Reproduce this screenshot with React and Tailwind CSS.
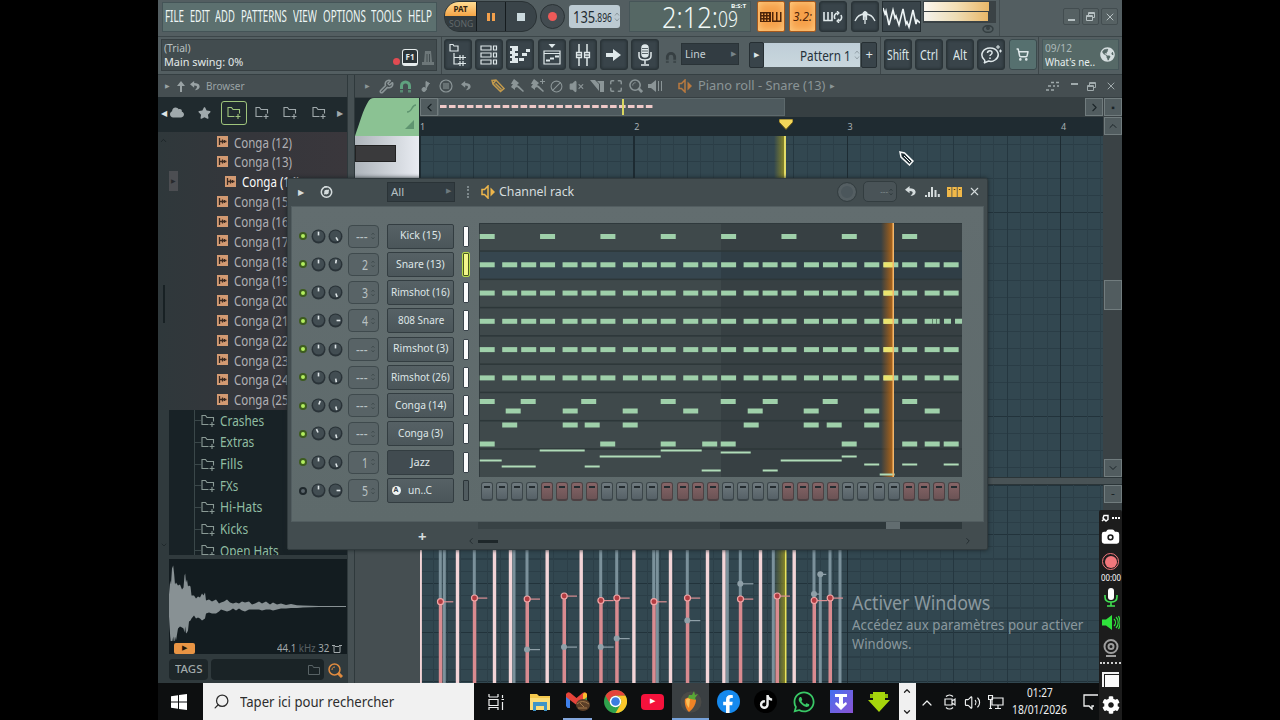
import { useLayoutEffect, useRef } from 'react';
import {
  Ban, Camera, ChevronDown, ChevronLeft, ChevronRight, ChevronUp, Maximize, Music2,
  Search, ShoppingCart, Volume2, VolumeX, Wrench, X,
} from 'lucide-react';
import { FaFacebookF, FaGlobeAmericas, FaTiktok, FaWhatsapp, FaCloud, FaStar, FaCog } from 'react-icons/fa';

// Squeezes a line of text into the width of its box (condensed UI lettering)
function Fit({ className = '', children }) {
  const box = useRef(null);
  const line = useRef(null);
  useLayoutEffect(() => {
    const k = box.current.clientWidth / line.current.offsetWidth;
    line.current.style.transform = `scaleX(${k})`;
  }, [children]);
  return (
    <span ref={box} className={`block shrink-0 whitespace-nowrap ${className}`}>
      <span ref={line} className="inline-block origin-left">{children}</span>
    </span>
  );
}

const MENU = [
  ['FILE', 'w-[19px]'], ['EDIT', 'w-[20px] ml-[6px]'], ['ADD', 'w-[20px] ml-[5px]'], ['PATTERNS', 'w-[46px] ml-[6px]'],
  ['VIEW', 'w-[24px] ml-[6px]'], ['OPTIONS', 'w-[43px] ml-[6px]'], ['TOOLS', 'w-[31px] ml-[5px]'], ['HELP', 'w-[24px] ml-[6px]'],
];

function DarkButton({ className = '', children }) {
  return (
    <div className={`flex h-[31px] w-[28px] shrink-0 items-center justify-center rounded-[3px] border border-[#2b3438] bg-[#39444a] text-[#dfe8ea] shadow-[inset_0_0_3px_#20292d] ${className}`}>
      {children}
    </div>
  );
}

function UndoArrow({ className }) {
  return (
    <svg viewBox="0 0 12 12" className={className} fill="currentColor">
      <path d="M5 0 0 4l5 4V5.500c3 0 4 1 3 3L6 11c4-.5 6-2.500 5.500-5C11 3.500 8.500 2.500 5 2.500z" />
    </svg>
  );
}

function Horseshoe({ className }) {
  return (
    <svg viewBox="0 0 13 13" className={className} fill="none" stroke="currentColor" strokeWidth="3">
      <path d="M2.500 9V6a4 4 0 0 1 8 0v3" /><path d="M2.500 10v2.500M10.500 10v2.500" opacity=".7" />
    </svg>
  );
}

function Transport() {
  return (
    <div className="ml-[7px] mt-px flex h-[31px] w-[93px] overflow-hidden rounded-[15px] border border-[#2a3235] bg-[#3a4449]">
      <div className="w-[31px] bg-[#333b3f]">
        <div className="flex h-[14px] items-center justify-center bg-gradient-to-b from-[#ffdc92] to-[#f5a545] text-[8px] font-bold text-[#31230f]">
          <Fit className="w-[14px]">PAT</Fit>
        </div>
        <div className="flex h-[16px] items-center justify-center text-[9px] text-[#62696b]">
          <Fit className="w-[24px]">SONG</Fit>
        </div>
      </div>
      <div className="flex w-[30px] items-center justify-center gap-[2px] border-x border-[#151b1e]">
        <i className="h-[8px] w-[3px] bg-[#f2a04c]" />
        <i className="h-[8px] w-[3px] bg-[#f2a04c]" />
      </div>
      <div className="flex flex-1 items-center justify-center pr-px"><i className="h-[8px] w-[8px] bg-[#cbd9de]" /></div>
    </div>
  );
}

function Spinner({ className = '' }) {
  return (
    <svg viewBox="0 0 6 12" className={`h-[12px] w-[6px] ${className}`} fill="none" stroke="currentColor">
      <path d="M1 4.500 3 2l2 2.500M1 7.500 3 10l2-2.500" />
    </svg>
  );
}

function WinButton({ kind }) {
  return (
    <div className="flex h-[17px] w-[17px] items-center justify-center rounded-[2px] border border-[#434d50] bg-[#566163] text-[#b6c0c2]">
      {kind === 'min' && <i className="mt-[6px] h-[2px] w-[7px] bg-current" />}
      {kind === 'max' && <RestoreIcon />}
      {kind === 'close' && <X className="h-[12px] w-[12px]" />}
    </div>
  );
}

function RestoreIcon() {
  return (
    <svg viewBox="0 0 9 9" className="h-[9px] w-[9px]" fill="none" stroke="currentColor">
      <path d="M.5 3.500h6v5h-6zM.5 4.500h6M2.500 3V.5h6v5H7M2.500 1.500h6" />
    </svg>
  );
}

function TopRow() {
  return (
    <div className="flex h-[37px] shrink-0 items-start border-b border-[#3c4649] bg-[#535e61] pl-[4px]">
      <div className="mt-[2px] flex h-[30px] w-[275px] items-center border border-[#445457] bg-[#5c706f] pb-[2px] pl-[2px] text-[16px] leading-none text-[#eef6f5]">
        {MENU.map(([t, w]) => <Fit key={t} className={w}>{t}</Fit>)}
      </div>
      <Transport />
      <div className="ml-[3px] mt-[4px] flex h-[25px] w-[25px] items-center justify-center rounded-full border border-[#2a3235] bg-[#434c51]">
        <i className="h-[9px] w-[9px] rounded-full bg-[#ee5a58]" />
      </div>
      <div className="ml-[4px] mt-[5px] flex h-[23px] w-[51px] items-center rounded-[3px] bg-[#bccad2] pl-[4px] text-[#1f2a30]">
        <Fit className="w-[22px] text-[17px] leading-[22px]">135</Fit>
        <Fit className="w-[17px] pt-[3px] text-[12px] leading-[18px]">.896</Fit>
        <Spinner className="ml-[2px] text-[#8c999f]" />
      </div>
      <div className="ml-[9px] mt-px flex h-[31px] w-[122px] items-start border border-[#465558] bg-[#556764] pl-[32px] font-light text-[#f0f8f6]">
        <Fit className="w-[56px] text-[30px] leading-[29px]">2:12:</Fit>
        <Fit className="w-[20px] pt-[2px] text-[21px] leading-[30px]">09</Fit>
        <Fit className="-ml-[7px] w-[15px] text-[6px] font-bold leading-[9px]">B:S:T</Fit>
      </div>
      <div className="ml-[6px] mt-px flex h-[31px] w-[28px] items-center justify-center rounded-[2px] border border-[#a6591c] bg-[#f6a04a] text-[#4e2409] shadow-[inset_0_0_8px_#ffd28a]">
        <svg viewBox="0 0 22 12" className="h-[12px] w-[22px]" fill="currentColor">
          <path d="M0 1h11v10H0zm1.500 1.500v1.500H3V2.500zm3 0v1.500H6V2.500zm3 0v1.500H9V2.500zm-6 3V7H3V5.500zm3 0V7H6V5.500zm3 0V7H9V5.500zm-6 3V10H3V8.500zm3 0V10H6V8.500zm3 0V10H9V8.500z" fillRule="evenodd" />
          <path d="M12 1h1.500v8.500H16V1h1.500v8.500H20V1h1.500v10H12z" />
        </svg>
      </div>
      <div className="ml-[4px] mt-px flex h-[31px] w-[27px] items-center justify-center rounded-[2px] border border-[#a6591c] bg-[#f6a04a] text-[13px] italic text-[#4e2409] shadow-[inset_0_0_8px_#ffd28a]">
        <Fit className="w-[19px]">3.2:</Fit>
      </div>
      <DarkButton className="ml-[3px] mt-px">
        <svg viewBox="0 0 20 12" className="h-[12px] w-[20px]" fill="none" stroke="currentColor" strokeWidth="1.600">
          <path d="M1 1v8.500h8V1M5 1v8" /><path d="M12 8c-1.500-3 0-6 3-6M18 4c1.500 3 0 6-3 6" /><path d="m14 0 2 2-2 2M16 8l-2 2 2 2" strokeWidth="1.200" />
        </svg>
      </DarkButton>
      <DarkButton className="ml-[4px] mt-px">
        <svg viewBox="0 0 22 14" className="h-[14px] w-[22px]" fill="none" stroke="currentColor" strokeWidth="1.300">
          <path d="M1 11c2-5 5-7 10-7s8 2 10 7" /><circle cx="11" cy="4" r="2" fill="currentColor" /><path d="M11 1v13M9.500 6v4M12.500 6v4" />
        </svg>
      </DarkButton>
      <div className="ml-[3px] mt-px h-[31px] w-[39px] border border-[#252e32] bg-[#39444a]">
        <svg viewBox="0 0 37 29" className="h-full w-full" fill="none" stroke="#eef5f6" strokeWidth="1.600">
          <path d="M0 6l2 6 1-3 3 14 4-15 2 8 1-2 3 9 4-16 3 15 1-2 2 5 4-17 3 14 1-4 3 3" />
        </svg>
      </div>
      <div className="ml-[2px] mt-px w-[73px]">
        <div className="flex h-[22px] flex-col gap-px bg-[#3a4245] p-px">
          <div className="h-[9px] w-[65px] bg-gradient-to-r from-[#fbf7ee] via-[#f3dfb4] to-[#e9b868]" />
          <div className="h-[9px] w-[64px] bg-gradient-to-r from-[#f4f3ec] via-[#eeddb5] to-[#e9b868]" />
        </div>
        <svg viewBox="0 0 12 8" className="ml-[59px] mt-[2px] h-[8px] w-[12px]" fill="none" stroke="#343e41" strokeWidth="1.500">
          <ellipse cx="6" cy="4" rx="5" ry="3.300" /><circle cx="6" cy="3" r="1.200" />
        </svg>
      </div>
      <div className="ml-[3px] h-[36px] w-px bg-[#434d50]" />
      <div className="ml-[63px] mt-[8px] flex gap-[2px]">
        <WinButton kind="min" /><WinButton kind="max" /><WinButton kind="close" />
      </div>
    </div>
  );
}

function ToolRow() {
  return (
    <div className="flex h-[38px] shrink-0 items-start border-b border-[#353f42] bg-[#535e61] pl-[3px] pt-[2px]">
      <div className="flex h-[32px] w-[276px] justify-between border border-[#363f42] bg-[#424c4f] pl-[2px] text-[11px] leading-[14px] text-[#e3eaea]">
        <div className="pt-px">
          <Fit className="w-[27px] text-[#b9c1c2]">(Trial)</Fit>
          <Fit className="w-[79px]">Main swing: 0%</Fit>
        </div>
        <div className="flex items-end pb-[4px] pr-[2px]">
          <i className="mb-px mr-[2px] h-[7px] w-[7px] rounded-full bg-[#e24b52]" />
          <div className="flex h-[17px] w-[16px] items-center justify-center rounded-[3px] border-[1.5px] border-b-[3px] border-[#e6eced] bg-[#2b3438] text-[8px] font-bold leading-none">F1</div>
          <svg viewBox="0 0 12 15" className="ml-[4px] h-[15px] w-[12px]" fill="#6d7779"><path d="M3 0h6l1 11h2v3H0v-3h2z" /><path d="M5 3v8M7.500 3v8" stroke="#424c4f" /></svg>
        </div>
      </div>
      <div className="ml-[4px] -mt-[2px] h-[37px] w-px bg-[#3d4649]" />
      <div className="ml-[2px] flex gap-[3.2px]">
        <DarkButton>
          <svg viewBox="0 0 20 24" className="h-[24px] w-[20px]" fill="none" stroke="currentColor" strokeWidth="1.200">
            <path d="M2 8V1.500h3l1 1.500h4v5zM6 10v11h5M6 14.500h5M12 12v5M12 18v5M15 12v5M15 18v5M10 14.500h8M10 20.500h8" />
          </svg>
        </DarkButton>
        <DarkButton>
          <svg viewBox="0 0 18 20" className="h-[20px] w-[18px]" fill="none" stroke="currentColor" strokeWidth="1.200">
            <path d="M1 1h10v4H1zM1 8h10v4H1zM1 15h10v4H1zM13.500 1h3v4h-3zM13.500 8h3v4h-3zM13.500 15h3v4h-3z" />
          </svg>
        </DarkButton>
        <DarkButton>
          <svg viewBox="0 0 20 17" className="h-[17px] w-[20px]" fill="currentColor">
            <path d="M0 0h8v5H5v2h3v3H5v2h3v5H0v-2h2v-3H0v-2h2V8H0V5h2V2H0zM9 12h5v3H9zM12 7h5v3h-5zM16 3h4v3h-4z" />
          </svg>
        </DarkButton>
        <DarkButton>
          <svg viewBox="0 0 18 21" className="h-[21px] w-[18px]" fill="none" stroke="currentColor" strokeWidth="1.200">
            <path d="M5.500 0h7L9 4z" fill="currentColor" stroke="none" /><path d="M1 7h16v13H1zM1 9.500h16" /><path d="M3 16.500h4M7 14.500h4M12 12.500h4" strokeWidth="2" />
          </svg>
        </DarkButton>
        <DarkButton>
          <svg viewBox="0 0 16 22" className="h-[22px] w-[16px]" fill="none" stroke="currentColor">
            <path d="M4 0v8M4 14v8M12 0v8M12 14v8" strokeWidth="2" opacity=".75" /><path d="M1.500 8.500h5v5h-5zM9.500 8.500h5v5h-5zM2 11h4M10 11h4" strokeWidth="1.300" />
          </svg>
        </DarkButton>
        <DarkButton>
          <svg viewBox="0 0 15 12" className="h-[12px] w-[15px]" fill="currentColor"><path d="M0 4h7V0l8 6-8 6V8H0z" /></svg>
        </DarkButton>
        <DarkButton>
          <svg viewBox="0 0 14 22" className="h-[22px] w-[14px]" fill="none" stroke="currentColor" strokeWidth="1.500">
            <rect x="4" y="1" width="6" height="12" rx="3" fill="currentColor" /><path d="M1 8v4c0 2 2 4 6 4s6-2 6-4V8M7 16v4M3 21h8" /><path d="M4 4.500h6M4 7h6M4 9.500h6" stroke="#39444a" strokeWidth=".8" />
          </svg>
        </DarkButton>
      </div>
      <Horseshoe className="ml-[6px] mt-[12px] h-[13px] w-[12px] text-[#363f42]" />
      <div className="ml-[4px] mt-[4px] flex h-[22px] w-[58px] items-center border border-[#2a3337] bg-[#323c42] pl-[3px] text-[11px] text-[#c5d0d4]">
        <Fit className="w-[21px]">Line</Fit>
        <span className="ml-auto mr-[2px] text-[7px] text-[#78848a]">▶</span>
      </div>
      <div className="ml-[10px] mt-[3px] flex h-[26px] w-[15px] items-center justify-center rounded-[2px] border border-[#262f33] bg-[#39444a] text-[7px] text-[#dde6e8]">▶</div>
      <div className="mt-[4px] flex h-[24px] w-[96px] items-center bg-gradient-to-b from-[#bfced8] to-[#c9d7dd] pl-[36px] text-[15px] text-[#25313a]">
        <Fit className="w-[51px]">Pattern 1</Fit>
        <Spinner className="ml-[3px] text-[#96a4ab]" />
      </div>
      <div className="ml-px mt-[3px] flex h-[26px] w-[16px] items-center justify-center rounded-[2px] border border-[#262f33] bg-[#39444a] text-[13px] text-[#dde6e8]">+</div>
      <div className="ml-[3px] -mt-[2px] h-[37px] w-px bg-[#3d4649]" />
      <div className="ml-[3px] flex gap-[3.100px] text-[15px]">
        <DarkButton><Fit className="w-[22px]">Shift</Fit></DarkButton>
        <DarkButton><Fit className="w-[18px]">Ctrl</Fit></DarkButton>
        <DarkButton><Fit className="w-[14px]">Alt</Fit></DarkButton>
        <DarkButton>
          <svg viewBox="0 0 22 20" className="h-[20px] w-[22px]" fill="none" stroke="currentColor" strokeWidth="1.500">
            <path d="M4 18c1-1 1-2 .5-3C-1 10 3 3 10 3c8 0 11 8 5 12-2 1.500-5 1.500-6.500 1L4 18z" /><path d="M7.500 8c0-3 5-3 4.500 0 0 1.500-2 1.500-2 3M10 12.500V14" /><path d="M18 0v4M16 2h4M20.500 4.500v3M19 6h3" strokeWidth="1" />
          </svg>
        </DarkButton>
        <div className="flex h-[31px] w-[28px] items-center justify-center rounded-[3px] border border-[#3b4a4d] bg-[#56706f] text-[#dfe8ea]"><ShoppingCart className="h-[13px] w-[13px]" strokeWidth={2.8} /></div>
      </div>
      <div className="ml-px -mt-[2px] h-[37px] w-px bg-[#3d4649]" />
      <div className="ml-[3px] flex h-[31px] w-[77px] items-center justify-between border border-[#46575a] bg-[#566967] pl-[2px] pr-[3px] text-[10.5px] leading-[14px] text-[#e8f0f0]">
        <div><Fit className="w-[27px] text-[#acb9b9]">09/12</Fit><Fit className="w-[50px]">What's ne..</Fit></div>
        <FaGlobeAmericas className="h-[15px] w-[15px] text-[#d5dedf]" />
      </div>
    </div>
  );
}

const CONGAS = Array.from({ length: 14 }, (_, i) => i + 12);
const FOLDERS = [
  ['Crashes', 'w-[44px]'], ['Extras', 'w-[34px]'], ['Fills', 'w-[23px]'], ['FXs', 'w-[18px]'],
  ['Hi-Hats', 'w-[42px]'], ['Kicks', 'w-[28px]'], ['Open Hats', 'w-[59px]'],
];

function FolderIcon({ className = '' }) {
  return (
    <svg viewBox="0 0 14 13" className={`h-[13px] w-[14px] shrink-0 ${className}`} fill="none" stroke="currentColor" strokeWidth="1.100">
      <path d="M7.500 10.500H1V1.500h3.500L6 3.500h6.500v4M11 8v5M8.500 10.500h5" />
    </svg>
  );
}

// [x, height above the axis, depth below it]
const WAVE = [
  [0, 12, 10], [1.2, 26, 30], [2, 22, 37], [3, 38, 37], [4.2, 41, 30], [5.2, 32, 38], [6, 22, 30], [7, 24, 34], [9, 21, 22], [11, 22, 20],
  [13, 17, 21], [14.5, 19, 22], [15.5, 31, 26], [16.2, 33, 20], [17, 24, 27], [18, 27, 26], [19, 20, 24], [20, 21, 15], [21.5, 20, 14],
  [22.5, 11, 12], [25, 11, 9], [27, 8, 12], [29, 10, 11], [31, 9, 12], [33, 13, 14], [34.500, 11, 13], [36, 14, 12], [37, 6, 7], [40, 7, 6],
  [43, 5, 7], [47, 7, 7], [50, 3, 5], [52, 4, 3], [55, 5, 4], [58, 7, 5], [61, 4, 4], [64, 3, 2], [67, 4, 4], [70, 3, 2], [73, 5, 4],
  [76, 4, 5], [80, 5, 3], [83, 2, 3], [86, 3, 3], [90, 5, 3], [93, 3, 4], [97, 5, 3], [101, 2, 3], [104, 4, 4], [108, 2, 3], [112, 3, 2],
  [117, 1.5, 2], [122, 2.5, 1.5], [128, 1.2, 1.5], [134, 1, 1], [150, 0.6, 0.6], [177, 0.5, 0.5],
];
const wavePoints = [
  ...WAVE.map(([x, up]) => `${x},${47.5 - up}`),
  ...[...WAVE].reverse().map(([x, , down]) => `${x},${47.5 + down}`),
].join(' ');

function Browser() {
  return (
    <aside className="flex w-[189px] shrink-0 flex-col bg-[#303a3d]">
      <div className="flex h-[22px] items-center bg-[#454e51] pl-[7px] text-[11px] text-[#9aa3a5]">
        <span className="text-[6px]">▶</span>
        <svg viewBox="0 0 8 11" className="ml-[7px] h-[11px] w-[8px]" fill="currentColor"><path d="M4 0l4 5H5v6H3V5H0z" /></svg>
        <UndoArrow className="ml-[5px] h-[10px] w-[10px]" />
        <Fit className="ml-[6px] w-[39px]">Browser</Fit>
      </div>
      <div className="flex h-[35px] items-center bg-[#202a2e] pb-[4px] pl-[3px] text-[#a0a9ac]">
        <span className="text-[8px] text-[#dfe5e6]">◀</span>
        <FaCloud className="ml-[3px] h-[13px] w-[14px]" />
        <FaStar className="ml-[14px] h-[12px] w-[13px]" />
        <div className="ml-[10px] flex h-[24px] w-[26px] shrink-0 items-center justify-center rounded-[3px] border border-[#9fc47c] text-[#9fc47c]"><FolderIcon /></div>
        <FolderIcon className="ml-[8px]" />
        <FolderIcon className="ml-[14px]" />
        <FolderIcon className="ml-[15px]" />
        <span className="ml-[11px] text-[8px]">▶</span>
      </div>
      <div className="flex h-[278px] bg-gradient-to-r from-[#2f383b] via-[#35363b] to-[#3a373c]">
        <div className="flex w-[11px] flex-col items-center">
          <ChevronUp className="mt-[4px] h-[9px] w-[9px] text-[#182124]" />
          <i className="mt-[140px] h-[38px] w-[2px] bg-[#182124]" />
        </div>
        <div className="w-[10px] pt-[39px]">
          <div className="flex h-[20px] w-[9px] items-center justify-center bg-[#4c4e52] text-[6px] text-[#272a2d]">▶</div>
        </div>
        <div className="pl-[38px]">
          {CONGAS.map((n) => (
            <div key={n} className={`flex h-[19.820px] items-center text-[14.5px] leading-none ${n === 14 ? 'pl-[8px] text-[#fafafa]' : 'text-[#b0b0b4]'}`}>
              <svg viewBox="0 0 11 11" className="h-[11px] w-[11px]"><path d="M0 0h11v11H0z" fill="#d39a72" /><path d="M2.500 2v7M2.500 5.500h7M5.500 3.500v4M7.500 4v3" stroke="#3b2b22" strokeWidth="1.300" /></svg>
              <Fit className="ml-[6px] w-[58px]">{`Conga (${n})`}</Fit>
            </div>
          ))}
        </div>
      </div>
      <div className="flex h-[145px] overflow-hidden">
        <div className="flex w-[11px] items-end justify-center pb-[6px]"><ChevronDown className="h-[8px] w-[8px] text-[#182124]" /></div>
        <div className="flex-1 bg-[#182226]">
          <div className="ml-[25px] border-l border-[#3a4749]">
            {FOLDERS.map(([t, w]) => (
              <div key={t} className="flex h-[21.650px] items-center text-[14px] leading-none text-[#90bda2]">
                <i className="h-px w-[6px] bg-[#3a4749]" />
                <FolderIcon className="text-[#8a9a95]" />
                <Fit className={`ml-[5px] ${w}`}>{t}</Fit>
              </div>
            ))}
          </div>
        </div>
      </div>
      <div className="ml-[11px] mt-[4px] h-[95px] bg-[#131c20]">
        <svg viewBox="0 0 178 95" className="h-[82px] w-[178px]" preserveAspectRatio="xMidYMin slice"><polygon points={wavePoints} fill="#889194" /></svg>
        <div className="mt-px flex h-[12px] items-center pl-[5px] pr-[5px] text-[11px] text-[#a2a9ab]">
          <div className="flex h-[11px] w-[21px] items-center justify-center rounded-[2px] bg-[#e89444] text-[7px] text-[#201408]">▶</div>
          <Fit className="ml-auto w-[52px]">44.1 <span className="text-[#596164]">kHz</span> 32</Fit>
          <svg viewBox="0 0 10 9" className="ml-[3px] h-[9px] w-[10px]" fill="none" stroke="currentColor"><path d="M2 2v6.500h6V2M0 1.500h3M7 1.500h3M3 2.500h4" /></svg>
        </div>
      </div>
      <div className="ml-[11px] mt-[5px] flex items-center gap-[3px]">
        <div className="flex h-[21px] w-[39px] items-center justify-center rounded-[4px] bg-[#1d2629] text-[11px] font-medium text-[#a0a9aa]"><Fit className="w-[27px]">TAGS</Fit></div>
        <div className="flex h-[21px] w-[113px] items-center justify-end rounded-[4px] bg-[#1a2326] pr-[4px] text-[#586265]">
          <svg viewBox="0 0 12 10" className="h-[10px] w-[12px]" fill="none" stroke="currentColor"><path d="M.5 9.500v-9h4l1 2h6v7z" /></svg>
        </div>
        <svg viewBox="0 0 15 15" className="ml-px mt-px h-[15px] w-[15px]" fill="none" stroke="#df8a3f"><circle cx="6.500" cy="6.500" r="5.500" strokeWidth="1.500" /><path d="M4 7c0-2 1-3 3-3" /><path d="M10 10l4 4" strokeWidth="3" /></svg>
      </div>
    </aside>
  );
}

function ScrollKey({ className = '', children }) {
  return (
    <div className={`flex h-[18px] w-[18px] shrink-0 items-center justify-center border border-[#717c7e] bg-[#515c5f] text-[#1b2428] ${className}`}>{children}</div>
  );
}

const DASHES = Array.from({ length: 24 }, (_, i) => 1 + i * 8.95);

function PianoHeader() {
  return (
    <div className="flex h-[23px] items-center border-b border-[#363f42] bg-[#454e51] pl-[10px] text-[#8b9597]">
      <span className="w-[12px] text-[6px]">▶</span>
      <Wrench className="ml-[2px] h-[15px] w-[15px]" strokeWidth={2.5} />
      <Horseshoe className="ml-[5px] h-[13px] w-[13px] text-[#5fa27f]" />
      <Music2 className="ml-[8px] h-[13px] w-[12px] fill-current" />
      <svg viewBox="0 0 14 14" className="ml-[7px] h-[14px] w-[14px]" fill="none" stroke="currentColor" strokeWidth="1.200"><circle cx="7" cy="7" r="6" /><path d="M4 5h6M4 7h6M4 9h6" /></svg>
      <UndoArrow className="ml-[8px] h-[10px] w-[10px]" />
      <svg viewBox="0 0 14 14" className="ml-[20px] h-[14px] w-[14px]" fill="none" stroke="#c39a4c" strokeWidth="1.500"><path d="M1 1.500 5 1l8 8.500-3.500 3L2 5zM2 5l3-4M4.500 4.500l6 6" /></svg>
      <svg viewBox="0 0 15 14" className="ml-[5px] h-[14px] w-[15px]" fill="currentColor"><path d="M4 0l5 4-2 2 2 1 5 5-1 1-6-5-2 1 0 2-4-3 2-3H1l1-2z" /></svg>
      <svg viewBox="0 0 16 14" className="ml-[5px] h-[14px] w-[16px]" fill="currentColor"><path d="M4 0l5 4-2 2 2 1 5 5-1 1-6-5-2 1 0 2-4-3 2-3H1l1-2zM12 0h1v2h2v1h-2v2h-1V3h-2V2h2z" /></svg>
      <Ban className="ml-[4px] h-[13px] w-[13px] rotate-90" />
      <VolumeX className="ml-[6px] h-[15px] w-[15px] fill-current" />
      <svg viewBox="0 0 14 13" className="ml-[6px] h-[13px] w-[14px]" fill="currentColor"><path d="M0 0h5l4 4v7zM7 1h7v11h-4V4z" /></svg>
      <Maximize className="ml-[5px] h-[14px] w-[14px]" strokeWidth={2.5} />
      <svg viewBox="0 0 15 15" className="ml-[6px] h-[14px] w-[14px]" fill="none" stroke="currentColor"><circle cx="6.500" cy="6.500" r="5.500" strokeWidth="1.700" /><path d="M4 7c0-2 1-3 3-3" /><path d="M10 10l4 4" strokeWidth="3" /></svg>
      <svg viewBox="0 0 14 12" className="ml-[5px] h-[12px] w-[14px]" fill="currentColor"><path d="M0 4h3l5-4v12L3 8H0zM10 1h1v10h-1zM13 1h1v10h-1z" /></svg>
      <SpeakerPlay className="ml-[16px] text-[#b9793f]" />
      <Fit className="ml-[6px] w-[127px] text-[12.5px]">Piano roll - Snare (13)</Fit>
      <span className="ml-[5px] text-[6px]">▶</span>
      <div className="ml-auto mr-[5px] flex items-center gap-[9px] text-[#a0aaac]">
        <svg viewBox="0 0 16 10" className="h-[10px] w-[16px]" fill="none" stroke="currentColor" strokeWidth="1.500"><path d="M0 9h3M5 9h3M2 5h3M7 5h2M5 1.500h3M10 1.500h3M11 5h2" /></svg>
        <i className="mb-[5px] h-[2px] w-[7px] bg-current" />
        <RestoreIcon />
        <X className="h-[12px] w-[12px]" />
      </div>
    </div>
  );
}

function SpeakerPlay({ className = '' }) {
  return (
    <svg viewBox="0 0 14 14" className={`h-[14px] w-[14px] shrink-0 ${className}`} fill="none" stroke="currentColor" strokeWidth="1.500">
      <path d="M7 1v12L3.500 9.500H1v-5h2.500z" /><path d="M9.500 2.500 14 7l-4.500 4.500z" fill="currentColor" stroke="none" />
    </svg>
  );
}

// Velocity lanes: [x, y, stem above the handle], measured from the left edge of the grid
const PINK = [0, 36.3, 73.3, 89.3, 126, 160, 212.7, 249.3, 286.3, 302.7, 339.3, 373];
const GREY = [23.3, 93, 236.3, 306.3, 352.3, 419];
const RED = [
  [19.3, 51.7, true], [53.3, 48, true], [106, 49, true], [143, 46, false], [179.7, 50.5, true], [195.7, 48, true],
  [232.7, 51.7, true], [266.3, 48, true], [319.3, 49, true], [356, 46, false], [393, 50.5, true], [409, 48, true],
];
const GHOST = [[106, 99.5], [143, 97], [179.7, 97], [195.7, 88.5], [266.3, 70.5], [319.3, 33.7], [393, 44], [399.3, 24.3]];

function VelocityLane() {
  return (
    <svg viewBox="0 0 683 133" className="block h-[133px] w-[683px]">
      <defs>
        <linearGradient id="velHead"><stop offset="0" stopColor="#77772a" stopOpacity="0" /><stop offset="1" stopColor="#8d8b24" /></linearGradient>
      </defs>
      <rect x="354" y="0" width="12" height="133" fill="url(#velHead)" />
      {GREY.map((x) => <rect key={x} x={x - 0.5} width="3" height="133" fill="#7b919b" />)}
      <rect x="398.800" y="24" width="3" height="109" fill="#7b919b" />
      {RED.map(([x, y, top]) => (
        <g key={x}>
          {top && <rect x={x - 0.5} width="3" height={y} fill="#7b919b" />}
          <rect x={x - 0.5} y={y} width="3.500" height="133" fill="#d98b90" />
        </g>
      ))}
      {GHOST.map(([x, y]) => (
        <g key={`${x}-${y}`} fill="#8fa0a8"><rect x={x} y={y - 0.5} width={x > 390 ? 7 : 14} height="1.200" /><circle cx={x + 1} cy={y} r="3" /></g>
      ))}
      {PINK.map((x) => <rect key={x} x={x - 0.5} width={x ? 3.4 : 2.4} height="133" fill="#f3d5d8" />)}
      <rect x="365" width="1.500" height="133" fill="#e8e25c" />
      {RED.map(([x, y]) => (
        <g key={x}>
          <rect x={x} y={y - 0.5} width="14" height="1.200" fill="#dc8f93" />
          <circle cx={x + 1.2} cy={y} r="3" fill="#b23c42" stroke="#f0a5a6" strokeWidth="1.200" />
        </g>
      ))}
    </svg>
  );
}

function PianoRoll() {
  return (
    <section className="flex w-[767px] flex-col bg-[#454e51]">
      <PianoHeader />
      <div className="flex h-[379px]">
        <div className="w-[65px] bg-[#202a2e]">
          <svg viewBox="0 0 64 38" className="block h-[38px] w-[64px]">
            <path d="M0 38C5 24 8 12 13 4q2-4 6-4h45v38z" fill="#8bc293" />
            <path d="M52 14c6 0 4-7 9-7" stroke="#5f9470" fill="none" strokeWidth="1.500" /><path d="M50 31l9-9v9z" fill="#5f9470" />
          </svg>
          <div className="h-[341px] w-[64px] bg-gradient-to-r from-[#aeb5bb] to-[#e9ecf2] pt-[9px]"><div className="h-[17px] w-[41px] border border-[#222] bg-[#3a3a3c]" /></div>
        </div>
        <div className="w-[683px]">
          <div className="flex h-[19px] bg-[#363f42]">
            <ScrollKey className="border-[#3a4447] text-[#161f22]"><ChevronLeft className="h-[13px] w-[13px]" /></ScrollKey>
            <div className="h-[18px] w-[347px] border border-[#5d696c] bg-[#4e5a5e]">
              <svg viewBox="0 0 345 16" className="block h-[16px] w-[345px]">
                {DASHES.map((x) => <rect key={x} x={x} y="6" width="6.600" height="3" fill="#efc9c8" />)}
                <rect x="183" width="2" height="16" fill="#d9d660" />
              </svg>
            </div>
            <ScrollKey className="ml-auto"><ChevronRight className="h-[13px] w-[13px]" /></ScrollKey>
          </div>
          <div className="relative flex h-[19px] overflow-hidden bg-[#1f2b31] text-[9px] leading-[20px] text-[#a7b0b4]">
            {[1, 2, 3, 4].map((n) => <div key={n} className="w-[213.300px] shrink-0 pl-[1px] first:pl-0">{n}</div>)}
            <svg viewBox="0 0 14 11" className="absolute left-[359px] top-[2px] h-[11px] w-[14px]"><path d="M0 0h14v3L7 10.500 0 3z" fill="#f3d65a" stroke="#6e5d18" /></svg>
          </div>
          <div className="h-[341px] bg-[#324750] bg-[repeating-linear-gradient(90deg,#1d2b32_0_1.500px,transparent_1.500px_213.330px),repeating-linear-gradient(90deg,#253740_0_1px,transparent_1px_53.330px),repeating-linear-gradient(90deg,#2c3f48_0_1px,transparent_1px_13.333px),repeating-linear-gradient(180deg,transparent_0_76px,#22333b_76px_77px,transparent_77px_204px),repeating-linear-gradient(180deg,transparent_0_8px,#2a3d46_8px_9px,transparent_9px_17px)]">
            <div className="ml-[354px] h-full w-[12px] border-r-2 border-[#e3dc67] bg-gradient-to-r from-transparent to-[#85842a]" />
          </div>
        </div>
        <div className="flex w-[19px] flex-col bg-[#3a4245] pl-px">
          <ScrollKey className="text-[10px] leading-none">▪</ScrollKey>
          <ScrollKey className="mt-px"><ChevronUp className="h-[12px] w-[12px]" /></ScrollKey>
          <div className="mt-[145px] h-[30px] w-[18px] border border-[#717c7e] bg-[#515c5f]" />
          <ScrollKey className="mt-auto"><ChevronDown className="h-[12px] w-[12px]" /></ScrollKey>
        </div>
      </div>
      <div className="h-[8px] border-y border-[#2b3538] bg-[#495356]" />
      <div className="flex h-[198px]">
        <div className="w-[65px] bg-[#454e51]" />
        <div className="flex w-[683px] flex-col justify-end bg-[#324750] bg-[repeating-linear-gradient(90deg,#1d2b32_0_1.500px,transparent_1.500px_213.330px),repeating-linear-gradient(90deg,#253740_0_1px,transparent_1px_53.330px),repeating-linear-gradient(90deg,#2c3f48_0_1px,transparent_1px_13.333px),repeating-linear-gradient(180deg,#22333b_0_1px,transparent_1px_49px),repeating-linear-gradient(180deg,#2b3e47_0_1px,transparent_1px_12.250px)]">
          <VelocityLane />
        </div>
        <div className="w-[19px] bg-[#3a4245] pl-px"><ScrollKey className="text-[12px]">-</ScrollKey></div>
      </div>
    </section>
  );
}

const CHANNELS = [
  { n: '---', name: 'Kick (15)', w: 'w-[41px]', a: 0, b: 150 },
  { n: '2', name: 'Snare (13)', w: 'w-[49px]', a: 0, b: 10, picked: true },
  { n: '3', name: 'Rimshot (16)', w: 'w-[59px]', a: 0, b: 160 },
  { n: '4', name: '808 Snare', w: 'w-[46px]', a: 0, b: 90 },
  { n: '---', name: 'Rimshot (3)', w: 'w-[55px]', a: 0, b: 0 },
  { n: '---', name: 'Rimshot (26)', w: 'w-[59px]', a: 0, b: 170 },
  { n: '---', name: 'Conga (14)', w: 'w-[51px]', a: 20, b: 165 },
  { n: '---', name: 'Conga (3)', w: 'w-[45px]', a: -25, b: 165 },
  { n: '1', name: 'Jazz', w: 'w-[20px]', a: 0, b: 160, dark: true },
  { n: '5', name: 'un..C', w: 'w-[24px]', a: 0, b: 90, off: true },
];

function Knob({ angle }) {
  return (
    <svg viewBox="0 0 14 14" className="block h-[15px] w-[15px] shrink-0">
      <circle cx="7" cy="7" r="6.500" fill="#2a3338" /><circle cx="7" cy="6.500" r="5.200" fill="#424d52" />
      <path d="M7 6V2.500" stroke="#dfe6e8" strokeWidth="1.500" transform={`rotate(${angle} 7 7)`} />
    </svg>
  );
}

function ChannelStrip({ c }) {
  return (
    <div className="flex h-[28.280px] items-center">
      <i className={`h-[8px] w-[8px] rounded-full border-2 ${c.off ? 'border-[#20292d] bg-[#59646a]' : 'border-[#3d5c1f] bg-[#b2ee5e]'}`} />
      <span className="ml-[4px]"><Knob angle={c.a} /></span>
      <span className="ml-[2px]"><Knob angle={c.b} /></span>
      <div className="ml-[5px] flex h-[23px] w-[31px] items-center justify-end rounded-[4px] border border-[#3f4a4d] bg-[#586366] pr-[2px] text-[14px] text-[#b8c1c3]">
        {c.n === '---' ? <Fit className="w-[12px]">---</Fit> : <Fit className="w-[6px]">{c.n}</Fit>}
        <Spinner className="ml-[2px] scale-75 text-[#3d484b]" />
      </div>
      <div className={`ml-[8px] flex h-[25px] w-[67px] items-center justify-center rounded-[2px] border border-[#333d41] pb-px text-[11px] text-[#dfe6e7] ${c.dark ? 'bg-[#414b50]' : 'bg-gradient-to-b from-[#566165] to-[#4b565a]'}`}>
        {c.off && <span className="mr-[7px] flex h-[9px] w-[9px] items-center justify-center rounded-full bg-[#eef3f3] text-[7px] font-bold text-[#39444a]">A</span>}
        <Fit className={`${c.w} ${c.off ? 'mr-[18px]' : ''}`}>{c.name}</Fit>
      </div>
      <div className={`ml-[9px] w-[6px] rounded-[1px] border ${c.picked ? 'h-[23px] border-[#4a5a1c] bg-[#f3f58c] outline outline-[#b9dc4c]' : c.off ? 'h-[21px] border-[#2c3539] bg-[#515c60]' : 'h-[21px] border-[#39434a] bg-[#fbfbfc]'}`} />
    </div>
  );
}

const HATS = Array.from({ length: 24 }, (_, i) => Math.floor(i / 3) * 60.35 + [0, 22.5, 41.5][i % 3]);
const KICKS = Array.from({ length: 8 }, (_, i) => i * 60.35);
const CONGA14 = [[0, 41, 101.5, 181, 241, 283, 343, 422.5], [26, 83, 143, 203.5, 268, 324, 384.5, 445]];
const CONGA3 = [[22.5, 83, 105, 143, 264, 324, 347, 384.5], [0, 120.5, 181, 222.5, 241, 362, 422.5, 445, 464]];
const JAZZ = [
  [0, 22, 238], [22, 34, 244], [60, 45, 228], [105, 15, 244], [120, 61, 234], [181, 41, 228], [222, 19, 248], [241, 30, 230],
  [283, 15, 248], [301, 61, 238], [362, 15, 234], [384.5, 15, 242], [400, 15, 252], [422.5, 15, 242], [464, 15, 242],
];

function PatternView() {
  const note = (x, y) => <rect key={`${x}-${y}`} x={x + 0.7} y={y} width="15" height="5" fill="#9fd0aa" />;
  return (
    <svg viewBox="0 0 484 254" className="block h-[254px] w-[484px]">
      <defs>
        <linearGradient id="rackHead"><stop offset="0" stopColor="#b5630f" stopOpacity="0" /><stop offset="1" stopColor="#bb6914" /></linearGradient>
      </defs>
      <rect width="483" height="254" fill="#3f494b" />
      <rect y="28" width="483" height="28" fill="#36464f" />
      <rect x="242" width="241" height="254" fill="#20282b" opacity=".25" />
      {[1, 2, 3, 4, 5, 6, 7, 8].map((i) => <rect key={i} y={i * 28.28 - 1} width="483" height="1.500" fill="#2d3739" />)}
      <path d="M.5 254V.5H483" fill="none" stroke="#2f393c" />
      <rect x="402" width="13" height="254" fill="url(#rackHead)" />
      {KICKS.map((x) => note(x, 11))}
      {[1, 2, 4, 5].map((r) => HATS.map((x) => note(x, 11 + r * 28.28)))}
      {HATS.slice(0, 23).map((x) => note(x, 95.8))}
      <path d="M465 95.800h7v5h-7zM476 95.800h7v5h-7z" fill="#9fd0aa" />
      <path d="M453.500 96v5M457.500 96v5" stroke="#5d8068" />
      {[1, 2, 3, 4, 5].map((r) => <rect key={r} x="404.500" y={11 + r * 28.28} width="10" height="5" fill="#ece46e" />)}
      {CONGA14[0].map((x) => note(x, 176))}
      {CONGA14[1].map((x) => note(x, 185.5))}
      {CONGA3[0].map((x) => note(x, 199.5))}
      {CONGA3[1].map((x) => note(x, 218.5))}
      {JAZZ.map(([x, w, y]) => <rect key={x} x={x + 0.7} y={y - 1.5} width={w} height="2" fill="#b0dcb8" />)}
      <rect x="413.500" width="1.500" height="254" fill="#f3b66a" />
    </svg>
  );
}

function ChannelRack() {
  return (
    <div className="absolute left-[129px] top-[178px] flex h-[372px] w-[701px] flex-col rounded-[2px] border border-[#313b3e] bg-[#424c4f] shadow-[0_0_4px_#1b2427]">
      <div className="flex h-[27px] shrink-0 items-center pb-[2px] pl-[10px] text-[#d5dcdd]">
        <span className="w-[8px] text-[8px]">▶</span>
        <svg viewBox="0 0 12 12" className="ml-[14px] h-[13px] w-[13px]" fill="none" stroke="currentColor" strokeWidth="1.400"><circle cx="6" cy="6.500" r="4.800" /><path d="M4 1.700h2.500M8 4.500l-4 4" /><circle cx="6" cy="6.500" r="1.500" fill="currentColor" /></svg>
        <div className="ml-[54px] flex h-[20px] w-[68px] items-center border border-[#2a3337] bg-[#333d42] pl-[3px] text-[11.5px] text-[#b6c0c3]">
          <Fit className="w-[13px]">All</Fit>
          <span className="ml-auto mr-[3px] text-[7px] text-[#6d797e]">▶</span>
        </div>
        <div className="ml-[12px] h-[12px] border-l-2 border-dotted border-[#7d888b]" />
        <SpeakerPlay className="ml-[12px] text-[#eeb64b]" />
        <Fit className="ml-[4px] w-[75px] pt-px text-[12.5px]">Channel rack</Fit>
        <div className="ml-auto mr-[6px] flex items-center">
          <div className="h-[18px] w-[18px] rounded-full border-[3px] border-[#545e62] bg-[#4b565b] outline outline-[#343e41]" />
          <div className="ml-[7px] flex h-[21px] w-[34px] items-center justify-end rounded-[5px] border border-[#333d40] bg-[#495357] pr-[2px] text-[8px] text-[#7d888b]">---<Spinner className="scale-75 text-[#2e383b]" /></div>
          <UndoArrow className="ml-[8px] h-[11px] w-[11px]" />
          <svg viewBox="0 0 15 10" className="ml-[9px] h-[10px] w-[15px]" fill="currentColor"><path d="M0 8h2v2H0zM3 5h2v5H3zM6 0h2v10H6zM9.500 3h2v7h-2zM12.800 7h2v3h-2z" /></svg>
          <svg viewBox="0 0 15 10" className="ml-[7px] h-[10px] w-[15px]"><path d="M0 0h4.500v10H0zM5.300 0h4.500v10H5.300zM10.600 0H15v10h-4.400z" fill="#f0b849" /><path d="M1.500 2.500h1.500M6.800 2.500h1.500M12 2.500h1.500" stroke="#5f4516" /></svg>
          <X className="ml-[6px] h-[13px] w-[13px]" />
        </div>
      </div>
      <div className="mx-[3px] flex h-[316px] shrink-0 border border-[#525d60] bg-gradient-to-b from-[#626d6f] to-[#5e6a6b] pl-[7px] pt-[16px]">
        <div className="-mt-px w-[180px] shrink-0">{CHANNELS.map((c) => <ChannelStrip key={c.name} c={c} />)}</div>
        <div className="w-[484px]">
          <PatternView />
          <div className="flex pl-[1.500px] pt-[5px]">
            {Array.from({ length: 32 }, (_, i) => (
              <div key={i} className="w-[15.080px]">
                <div className={`h-[19px] w-[12px] rounded-[3px] border border-b-2 pt-[3px] ${i % 8 > 3 ? 'border-[#4d4143] bg-gradient-to-b from-[#876567] to-[#6b5355]' : 'border-[#3c464a] bg-gradient-to-b from-[#6f7a7f] to-[#566167]'}`}>
                  <div className="mx-auto h-[2px] w-[6px] bg-[#242c30]" />
                </div>
              </div>
            ))}
          </div>
        </div>
      </div>
      <div className="flex h-[26px]">
        <div className="w-[190px] pl-[130px] pt-[4px] text-[15px] font-bold leading-[20px] text-[#d5dcdd]">+</div>
        <div className="w-[484px]">
          <div className="flex h-[7px] bg-gradient-to-r from-[#384245] from-50% to-[#2e383b] to-50%"><div className="ml-[408px] w-[14px] bg-[#626d70]" /></div>
          <div className="flex h-[17px] items-end text-[#1e272a]">
            <ChevronLeft className="-ml-[12px] h-[10px] w-[10px]" />
            <i className="mb-[3px] ml-[2px] h-[3px] w-[20px] bg-current" />
            <ChevronRight className="-mr-[11px] ml-auto h-[10px] w-[10px]" />
          </div>
        </div>
      </div>
    </div>
  );
}

function Chrome() {
  return (
    <svg viewBox="0 0 24 24" className="h-[23px] w-[23px]">
      <circle cx="12" cy="12" r="12" fill="#2fa24c" />
      <path d="M1.600 6A12 12 0 0 1 22.400 6H12a6 6 0 0 0-5.200 9z" fill="#e5443a" />
      <path d="M22.400 6A12 12 0 0 1 12 24l5.200-9A6 6 0 0 0 12 6z" fill="#fbc629" />
      <circle cx="12" cy="12" r="6" fill="#fff" /><circle cx="12" cy="12" r="4.500" fill="#3b7de0" />
    </svg>
  );
}

function Gmail() {
  return (
    <svg viewBox="0 0 24 20" className="h-[20px] w-[24px]">
      <path d="M0 2h4v14H1.500L0 14z" fill="#3f80ea" /><path d="M17 2h4v10h-4z" fill="#34a853" />
      <path d="M0 2q2-3 4.500-1l6 5 6-5Q19-1 21 2v3l-10.500 8L0 5z" fill="#e5443a" /><path d="M17 2q2-3 4 0v3l-4 3z" fill="#f7be2d" />
      <ellipse cx="17" cy="13" rx="7" ry="6" fill="#5b3f28" /><path d="M11 12q5-5 12 0M12 16h9M14 11l4 4" stroke="#a67a4c" fill="none" />
    </svg>
  );
}

function Taskbar() {
  const cell = 'relative flex h-[37px] w-[37.700px] items-center justify-center';
  return (
    <footer className="flex h-[37px] shrink-0 bg-[#0d0f10] text-[#eef0f0]">
      <div className="flex w-[45px] items-center justify-center pr-[3px]">
        <svg viewBox="0 0 16 16" className="h-[16px] w-[16px]" fill="#fff"><path d="M0 2.200 7 1.200v6.300H0zM8 1l8-1v7.500H8zM0 8.500h7v6.300L0 13.800zM8 8.500h8V16l-8-1z" /></svg>
      </div>
      <div className="flex w-[271px] items-center bg-[#f1f1f1] pl-[10px] text-[#2d2d2d]">
        <Search className="h-[17px] w-[17px] -scale-x-100" strokeWidth={1.8} />
        <Fit className="ml-[10px] w-[154px] text-[15px]">Taper ici pour rechercher</Fit>
      </div>
      <div className="flex w-[47px] items-center justify-center pr-[3px]">
        <svg viewBox="0 0 16 16" className="h-[16px] w-[16px]" fill="none" stroke="currentColor" strokeWidth="1.200"><path d="M1 0v3M10 0v3M1 3h9M1 5.500h9v6H1zM1 16v-2.500h9V16M14.500 1v3M14.500 8v8M13.500 5.500h2.500" /></svg>
      </div>
      <div className={cell}>
        <svg viewBox="0 0 20 18" className="h-[18px] w-[20px]"><path d="M0 1h7l2 2h11v14H0z" fill="#f5c84c" /><path d="M0 5h20v12H0z" fill="#fadc78" /><path d="M3 18V9h14v9h-3v-5H6v5z" fill="#3d94c7" /></svg>
      </div>
      <div className={cell}><Gmail /><i className="absolute bottom-0 h-[2px] w-[29px] bg-[#83a6dc]" /></div>
      <div className={cell}><Chrome /></div>
      <div className={cell}>
        <div className="flex h-[16px] w-[23px] items-center justify-center rounded-[4px] bg-[#f5123c] text-[7px] text-white">▶</div>
      </div>
      <div className={`${cell} bg-[#3a3f42]`}>
        <svg viewBox="0 0 22 22" className="h-[22px] w-[22px]"><circle cx="11" cy="11" r="10.500" fill="#4a4a47" /><path d="M5 8c4-3 9-2 11 1 0 4-3 9-7 12-3-2-5-9-4-13z" fill="#f08325" /><path d="M6 9c1-2 3-2 4-1l-1 9c-2-2-3-5-3-8z" fill="#fbbf57" /><path d="M8 7l1-3 3 0 2-4 1 4 3-1-3 4 1 2-5-1z" fill="#58a636" /></svg>
        <i className="absolute bottom-0 h-[2px] w-full bg-[#76a2da]" />
      </div>
      <div className={cell}><div className="flex h-[23px] w-[23px] items-end justify-center rounded-full bg-[#1589ee]"><FaFacebookF className="h-[18px] w-[16px] text-white" /></div></div>
      <div className={cell}><div className="flex h-[23px] w-[23px] items-center justify-center rounded-full bg-black"><FaTiktok className="h-[14px] w-[14px]" /></div></div>
      <div className={cell}><FaWhatsapp className="h-[24px] w-[24px] text-[#39c866]" /></div>
      <div className={cell}>
        <div className="flex h-[23px] w-[23px] items-center justify-center bg-gradient-to-br from-[#3c6ff0] to-[#8752d4]">
          <svg viewBox="0 0 14 16" className="h-[16px] w-[14px]" fill="#fff"><path d="M1 0h12v3H9v7l3-2 1 2-6 6-6-6 1-2 3 2V3H1z" /></svg>
        </div>
      </div>
      <div className={cell}>
        <svg viewBox="0 0 22 22" className="h-[22px] w-[22px]"><path d="M5 1h12v8h5L11 21 0 9h5z" fill="#a6d60c" /><path d="M2 3h3v4H2zM17 3h3v4h-3z" fill="#8dbb0a" /></svg>
      </div>
      <div className="ml-px flex w-[17px] flex-col items-center justify-between bg-[#f0f0f0] py-[3px] text-[#222]"><ChevronUp className="h-[10px] w-[10px]" strokeWidth={3} /><ChevronDown className="h-[10px] w-[10px]" strokeWidth={3} /></div>
      <ChevronUp className="ml-[3px] mt-[12px] h-[16px] w-[16px]" strokeWidth={1.8} />
      <svg viewBox="0 0 14 16" className="ml-[8px] mt-[11px] h-[16px] w-[14px]" fill="none" stroke="currentColor" strokeWidth="1.200"><path d="M2 5h7v6H2zM9 7l3-2v6l-3-2M3 2.500C5 .5 8 .5 10 2.500M3 13.500c2 2 5 2 7 0" /></svg>
      <Volume2 className="ml-[7px] mt-[11px] h-[17px] w-[17px]" strokeWidth={1.6} />
      <svg viewBox="0 0 16 14" className="ml-[7px] mt-[12px] h-[14px] w-[16px]" fill="none" stroke="currentColor" strokeWidth="1.200"><path d="M4 3h11v7H4zM7 13.500h6M10 10v3M.5.5h4v4h-4zM2.500 5v8M1 13.500h3" /></svg>
      <div className="ml-[8px] flex w-[56px] flex-col items-center pt-[1px] text-[12px] leading-[17px]"><Fit className="w-[26px]">01:27</Fit><Fit className="w-[55px]">18/01/2026</Fit></div>
      <svg viewBox="0 0 16 16" className="ml-[15px] mt-[11px] h-[16px] w-[16px]" fill="none" stroke="currentColor" strokeWidth="1.300"><path d="M15 1H1v11h5l3 3v-3h2" /></svg>
    </footer>
  );
}

function RecorderBar() {
  return (
    <div className="absolute bottom-0 left-[941px] flex h-[210px] w-[23px] flex-col items-center rounded-t-[2px] bg-[#1c1c1c] text-white">
      <div className="mt-[4px] flex h-[8px] items-center gap-[3px]">
        <svg viewBox="0 0 8 8" className="h-[8px] w-[8px]" fill="none" stroke="currentColor" strokeWidth="1.400"><path d="M1 7l2-2M3 1.500h4v4l-2 1.500-3-3z" /></svg>
        <span className="flex gap-px"><i className="h-[2px] w-[2px] bg-white" /><i className="h-[2px] w-[2px] bg-white" /><i className="h-[2px] w-[2px] bg-white" /></span>
      </div>
      <Camera className="mt-[5px] h-[19px] w-[19px] fill-white [&>circle]:fill-white [&>circle]:stroke-[#1c1c1c]" />
      <div className="mt-[7px] flex h-[17px] w-[17px] items-center justify-center rounded-full border border-[#f2777c]"><i className="h-[12px] w-[12px] rounded-full bg-[#f2777c]" /></div>
      <Fit className="mt-[2px] w-[20px] text-[9px] leading-[12px]">00:00</Fit>
      <svg viewBox="0 0 14 19" className="mt-[4px] h-[19px] w-[14px]" fill="none" stroke="#41e052" strokeWidth="1.600"><rect x="4" y="0" width="6" height="12" rx="3" fill="#fff" stroke="none" /><path d="M1 7v2c0 3 2 5 6 5s6-2 6-5V7M7 14v4M3 18h8" /></svg>
      <svg viewBox="0 0 18 15" className="mt-[8px] h-[15px] w-[18px]" fill="#2fe23c"><path d="M0 4.500h4L10 0v15l-6-4.500H0z" /><path d="M12 4c2 2 2 5 0 7M14 2c3 3 3 8 0 11M16.500 1c2 4 2 9 0 13" stroke="#2fe23c" fill="none" strokeWidth="1.200" /></svg>
      <svg viewBox="0 0 16 18" className="mt-[9px] h-[18px] w-[16px]" fill="none" stroke="#9d9d9d" strokeWidth="2"><circle cx="8" cy="7.500" r="6.500" /><circle cx="8" cy="7.500" r="2.500" /><path d="M3 17h10" /></svg>
      <div className="mt-[5px] w-[21px] border-t-2 border-dotted border-[#cfcfcf]" />
      <div className="mt-[8px] h-[15px] w-[17px] border-l-2 border-t-2 border-[#f2f2f2] pl-[1px] pt-[1px]"><div className="h-full w-full bg-[#fafafa]" /></div>
      <FaCog className="mt-[9px] h-[18px] w-[18px]" />
    </div>
  );
}

function Watermark() {
  return (
    <div className="absolute left-[694px] top-[590px] text-[#8a989e]">
      <Fit className="w-[138px] text-[19px] leading-[26px]">Activer Windows</Fit>
      <Fit className="w-[231px] text-[14px] leading-[18px]">Accédez aux paramètres pour activer</Fit>
      <Fit className="w-[60px] text-[14px] leading-[19px]">Windows.</Fit>
    </div>
  );
}

export default function App() {
  return (
    <div className="h-[720px] w-[1280px] overflow-hidden bg-black font-['Noto_Sans','Open_Sans',sans-serif]">
      <main className="relative ml-[158px] flex h-[720px] w-[964px] flex-col">
        <TopRow />
        <ToolRow />
        <div className="flex h-[608px] shrink-0">
          <Browser />
          <div className="w-[8px] shrink-0 border-x border-[#2f393c] bg-[#465053]" />
          <PianoRoll />
        </div>
        <Taskbar />
        <ChannelRack />
        <Watermark />
        <RecorderBar />
        {/* pencil cursor */}
        <svg viewBox="0 0 15 15" className="absolute left-[741px] top-[151px] h-[15px] w-[15px]"><path d="M1 1l4.500 1L14 10l-3.500 4L2 6z" fill="#1d2a30" stroke="#f5f7f7" strokeWidth="1.500" /><path d="M5 5l6 6M7 4l6 6" stroke="#f5f7f7" /></svg>
      </main>
    </div>
  );
}
